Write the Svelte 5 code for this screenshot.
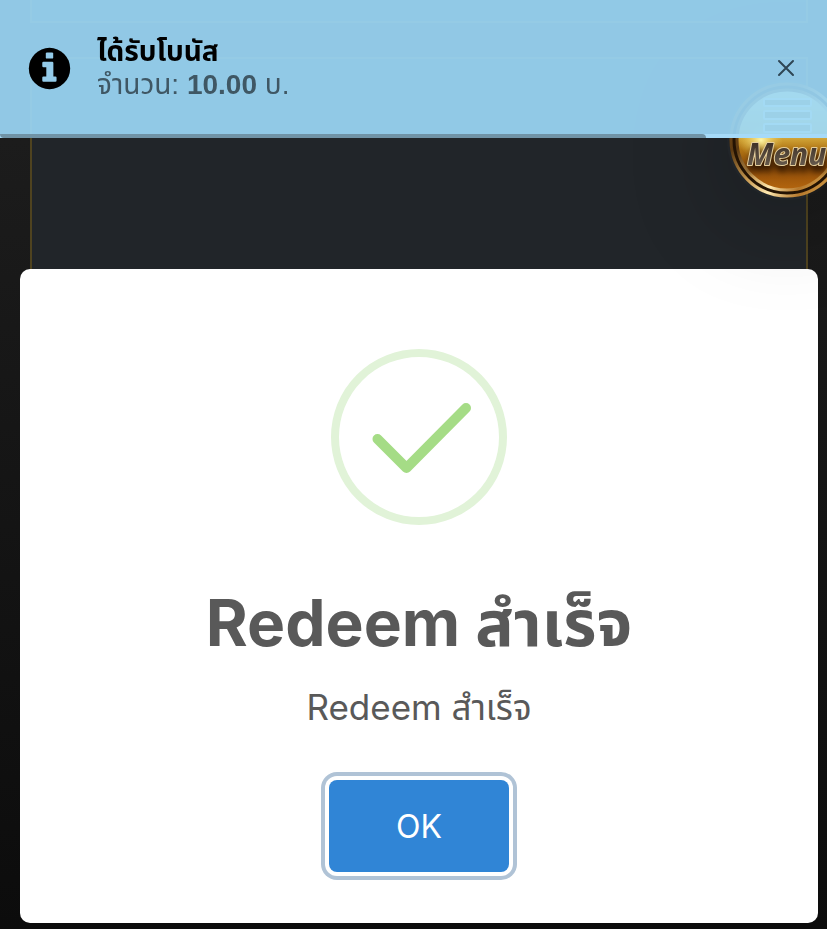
<script>
	//toast content
	let toastOpen = $state(true)
	let modalOpen = $state(true)
	let amount = 10
	let timeLeft = 85.4

	function closeToast(){ toastOpen = false }
	function closeModal(){ modalOpen = false }
</script>

<main class="page">
	<div class="panel small"></div>
	<div class="panel big"></div>
</main>

{#if modalOpen}
	<div class="overlay">
		<div class="modal" role="dialog" aria-labelledby="modal-title">
			<svg class="success" viewBox="0 0 176 176" aria-hidden="true">
				<circle cx="88" cy="88" r="84" fill="none" stroke="#e1f3d8" stroke-width="8"/>
				<path d="M46.5 90 L75.500 119 L135 59" fill="none" stroke="#a5dc86" stroke-width="10" stroke-linecap="round" stroke-linejoin="round"/>
			</svg>
			<h2 id="modal-title">Redeem สำเร็จ</h2>
			<p>Redeem สำเร็จ</p>
			<button class="confirm" onclick={closeModal}>OK</button>
		</div>
	</div>
{/if}

<button class="menu" aria-label="Menu">
	<svg viewBox="0 0 120 120">
		<defs>
			<linearGradient id="rim" x1="0" y1="0" x2="1" y2="1">
				<stop offset="0" stop-color="#8a5a1a"/>
				<stop offset=".3" stop-color="#5c3a12"/>
				<stop offset=".5" stop-color="#c89a52"/>
				<stop offset=".65" stop-color="#ffe9b0"/>
				<stop offset=".8" stop-color="#b5782c"/>
				<stop offset="1" stop-color="#f5c96a"/>
			</linearGradient>
			<linearGradient id="gold" x1="0" y1="0" x2="0" y2="1">
				<stop offset="0" stop-color="#fff3a0"/>
				<stop offset=".4" stop-color="#e8c64e"/>
				<stop offset=".6" stop-color="#b07414"/>
				<stop offset=".76" stop-color="#8a4a08"/>
				<stop offset="1" stop-color="#b5660f"/>
			</linearGradient>
			<radialGradient id="glow">
				<stop offset="0" stop-color="#fff6a8"/>
				<stop offset="1" stop-color="#f0cf52" stop-opacity="0"/>
			</radialGradient>
			<linearGradient id="steel" x1="0" y1="0" x2="0" y2="1">
				<stop offset="0" stop-color="#2d2018"/>
				<stop offset="1" stop-color="#75695a"/>
			</linearGradient>
		</defs>
		<circle cx="60" cy="60" r="56" fill="#241303" stroke="url(#rim)" stroke-width="3"/>
		<circle cx="60" cy="60" r="50" fill="url(#gold)" stroke="url(#rim)" stroke-width="3"/>
		<ellipse cx="34" cy="60" rx="22" ry="20" fill="url(#glow)"/>
		<g fill="#a88f45" stroke="#fff8d0" stroke-width="2">
			<rect x="37" y="19" width="47" height="7" rx="1"/>
			<rect x="37" y="31" width="47" height="8" rx="1"/>
			<rect x="37" y="44" width="47" height="8" rx="1"/>
		</g>
		<text x="20" y="85" class="word">Menu</text>
	</svg>
</button>

{#if toastOpen}
	<div class="toast" role="status">
		<svg class="info" viewBox="0 0 512 512" aria-hidden="true">
			<circle cx="256" cy="256" r="246"/>
			<g fill="#94cbe9">
				<rect x="212" y="64" width="88" height="74" rx="14"/>
				<path d="M184 176h104a14 14 0 0 1 14 14v160h24a14 14 0 0 1 14 14v36a14 14 0 0 1-14 14H184a14 14 0 0 1-14-14v-36a14 14 0 0 1 14-14h34V240h-34a14 14 0 0 1-14-14v-36a14 14 0 0 1 14-14z"/>
			</g>
		</svg>
		<div class="message">
			<strong class="title">ได้รับโบนัส</strong>
			<span>จำนวน: <b>{amount.toFixed(2)}</b> บ.</span>
		</div>
		<button class="close" aria-label="Close" onclick={closeToast}>
			<svg viewBox="0 0 18 18"><path d="M2 2 L16 16 M16 2 L2 16"/></svg>
		</button>
		<div class="progress"><div class="bar" style="width: {timeLeft}%"></div></div>
	</div>
{/if}

<style>
:global(body) {
	margin: 0;
	overflow: hidden;
	background: #0b0b0b;
	font-family: "Liberation Sans", "Noto Sans Thai", "Loma", sans-serif;
}

.page {
	box-sizing: border-box;
	min-height: 100vh;
	padding: 0 19px 8px 30px;
	display: flex;
	flex-direction: column;
	gap: 34px;
	background: linear-gradient(#1f1f1f, #181818 35%, #0c0c0c);
}

.panel {
	border: 2px solid #4f431f;
	background: #212529;
}

.panel.small {
	height: 21px;
	border-top: none;
}

.panel.big {
	flex: 1;
}

/* dialog */
.overlay {
	position: fixed;
	inset: 0;
	display: flex;
	align-items: flex-end;
	padding: 0 9px 6px 20px;
}

.modal {
	flex: 1;
	display: flex;
	flex-direction: column;
	align-items: center;
	padding: 80px 40px 51px;
	border-radius: 10px;
	background: #fff;
	color: #595959;
	text-align: center;
	font-family: Inter, "Noto Sans Thai", "Loma", sans-serif;
}

.success {
	width: 176px;
	height: 176px;
}

h2 {
	margin: 58px 0 0;
	font-size: 64px;
	line-height: 80px;
	font-weight: 700;
}

p {
	margin: 22px 0 0;
	font-size: 35px;
	line-height: 44px;
}

.confirm {
	width: 180px;
	height: 92px;
	margin-top: 51px;
	border: none;
	border-radius: 8px;
	background: #3085d6;
	box-shadow: 0 0 0 4px #fff, 0 0 0 8px #b0c3d6;
	color: #fff;
	font-family: inherit;
	font-size: 32px;
}

/* floating menu */
.menu {
	position: fixed;
	top: 80px;
	right: -20px;
	width: 120px;
	height: 120px;
	padding: 0;
	border: none;
	border-radius: 50%;
	background: none;
	box-shadow: 0 16px 100px rgba(0, 0, 0, .25);
}

.menu svg {
	display: block;
	width: 100%;
}

.word {
	font-family: "Open Sans", "Noto Sans", sans-serif;
	font-size: 30px;
	font-weight: 700;
	font-style: italic;
	fill: url(#steel);
	stroke: #e6cf9c;
	stroke-width: 2px;
	stroke-linejoin: round;
	paint-order: stroke;
	filter: drop-shadow(1px 6px 3px rgba(40, 18, 0, .9));
}

/* toast */
.toast {
	position: fixed;
	top: 0;
	left: 0;
	right: 0;
	box-sizing: border-box;
	height: 138px;
	display: flex;
	align-items: center;
	gap: 26px;
	padding: 0 32px 2px 28px;
	background: rgba(155, 215, 246, .92);
}

.info {
	width: 43px;
	height: 43px;
}

.message {
	flex: 1;
	display: flex;
	flex-direction: column;
	font-size: 28px;
	line-height: 33px;
	color: #3f5764;
}

.title {
	color: #000;
}

.close {
	width: 18px;
	height: 18px;
	padding: 0;
	border: none;
	background: none;
}

.close svg {
	display: block;
	width: 18px;
	fill: none;
	stroke: #2f4655;
	stroke-width: 2;
	stroke-linecap: round;
}

.progress {
	position: absolute;
	left: 0;
	right: 0;
	bottom: 0;
	height: 4px;
	background: #a6daf8;
}

.bar {
	height: 4px;
	border-radius: 0 4px 0 4px;
	background: #7093a6;
}
</style>
